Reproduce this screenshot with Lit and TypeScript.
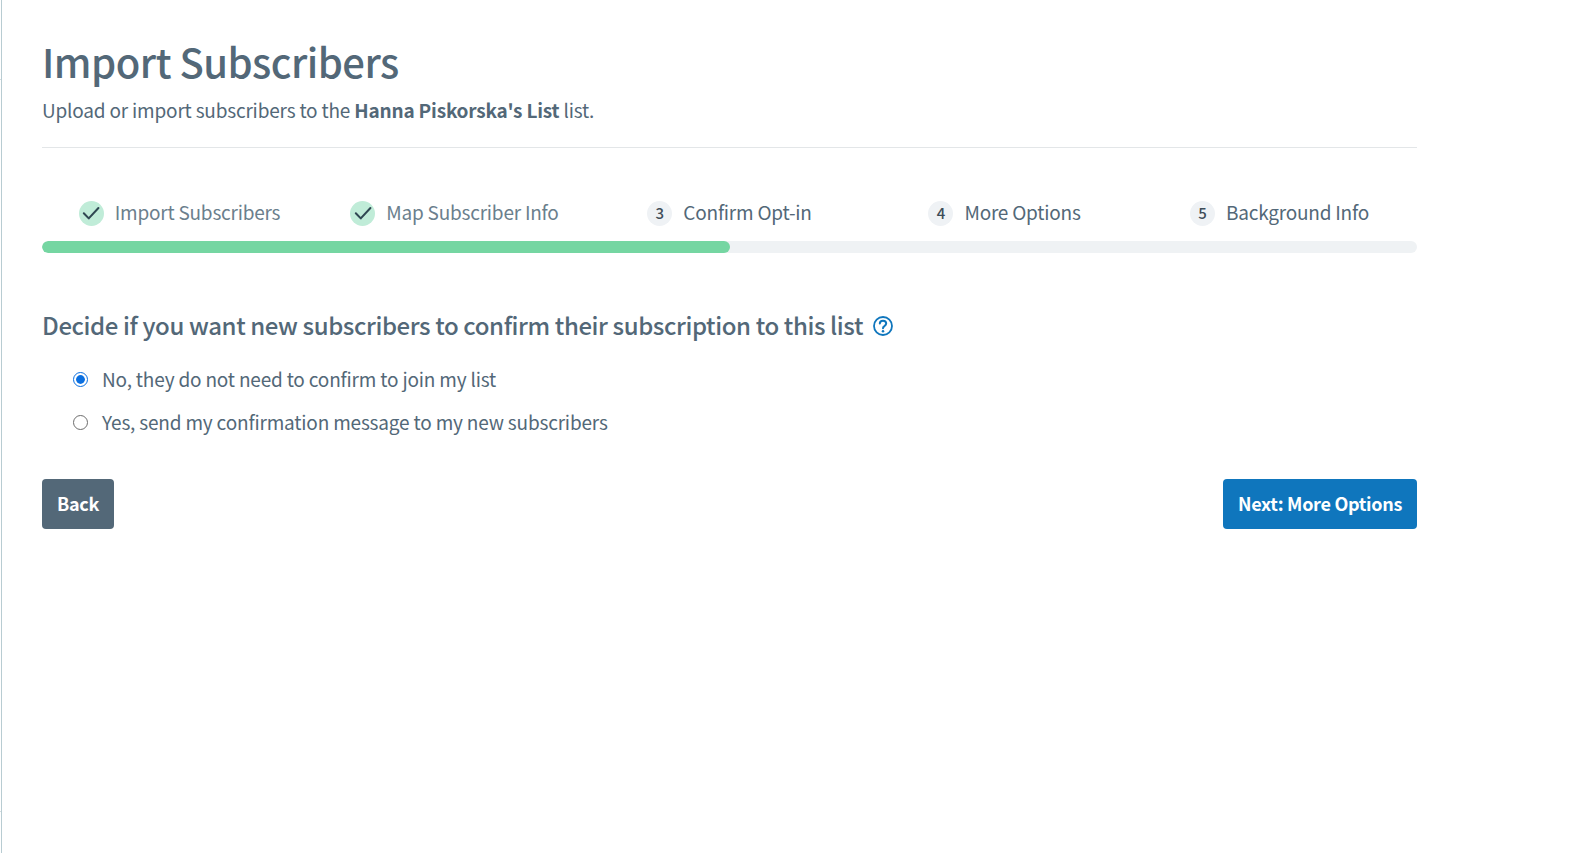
import { LitElement, html, css } from "lit";
import { customElement } from "lit/decorators.js";

const check = html`<svg width="18" height="18" viewBox="0 0 16 16" fill="none" stroke="#2f4752" stroke-width="1.8" stroke-linecap="round" stroke-linejoin="round"><path d="M1.6 8.2 6 12.8 14.6 3.6"/></svg>`;

const steps = [
  { n: 1, label: "Import Subscribers", done: true },
  { n: 2, label: "Map Subscriber Info", done: true },
  { n: 3, label: "Confirm Opt-in", done: false },
  { n: 4, label: "More Options", done: false },
  { n: 5, label: "Background Info", done: false },
];

@customElement("app-root")
export class AppRoot extends LitElement {
  static styles = css`
    :host {
      display: block;
      height: 853px;
      box-sizing: border-box;
      background: #fff;
      color: #536878;
      font-family: "Noto Sans CJK SC", "Source Sans Pro", "Noto Sans", sans-serif;
      position: relative;
    }
    .edge {
      position: absolute;
      left: 1px;
      top: 0;
      bottom: 0;
      width: 1px;
      background: #b8ccd2;
    }
    .tick {
      position: absolute;
      left: 0;
      width: 1px;
      height: 1px;
      background: #d4dde0;
    }
    .main {
      width: 1375px;
      margin-left: 42px;
      padding-top: 35px;
    }
    h1 {
      margin: 0;
      font-size: 40px;
      line-height: 52px;
      font-weight: 500;
      letter-spacing: -0.52px;
      color: #536878;
    }
    .sub {
      margin: 9px 0 0;
      font-size: 19px;
      line-height: 28px;
      font-weight: 400;
      letter-spacing: -0.19px;
    }
    .sub b { font-weight: 700; }
    hr {
      border: 0;
      height: 1px;
      background: #e3e6e8;
      margin: 23px 0 0;
    }
    .steps {
      display: grid;
      grid-template-columns: repeat(5, 1fr);
      margin-top: 50px;
    }
    .step {
      display: flex;
      align-items: center;
      justify-content: center;
      gap: 11px;
      height: 26px;
      font-size: 19px;
      letter-spacing: -0.22px;
      color: #536878;
    }
    .step.done { color: #6b7f8d; }
    .dot {
      width: 25px;
      height: 25px;
      box-sizing: border-box;
      padding-bottom: 2px;
      border-radius: 50%;
      background: #eff2f5;
      color: #3d4c58;
      display: flex;
      align-items: center;
      justify-content: center;
      font-size: 15px;
      font-weight: 500;
      letter-spacing: 0;
      margin-top: 4px;
    }
    .done .dot { background: #c0ecd8; padding-bottom: 0; }
    .bar {
      height: 12px;
      border-radius: 6px;
      background: #eff2f4;
      margin-top: 17px;
      overflow: hidden;
    }
    .fill {
      height: 100%;
      border-radius: 6px;
      background: #75d6a2;
    }
    h2 {
      margin: 56px 0 0;
      font-size: 24px;
      line-height: 32px;
      font-weight: 500;
      letter-spacing: -0.39px;
      display: flex;
      align-items: center;
      gap: 10px;
    }
    h2 svg { margin-top: 2px; }
    .opts {
      margin-top: 24px;
      padding-left: 31px;
      display: flex;
      flex-direction: column;
      gap: 15px;
    }
    label {
      display: flex;
      align-items: center;
      gap: 14px;
      font-size: 19px;
      line-height: 28px;
      letter-spacing: -0.18px;
    }
    .radio {
      width: 15px;
      height: 15px;
      box-sizing: border-box;
      border: 1.3px solid #6d6d6d;
      border-radius: 50%;
      background: #fff;
      flex: none;
    }
    .radio.on {
      border: 1.6px solid #0b6fe0;
      padding: 1.8px;
      background: #0b6fe0;
      background-clip: content-box;
    }
    .actions {
      display: flex;
      justify-content: space-between;
      margin-top: 43px;
    }
    button {
      height: 50px;
      border: 0;
      border-radius: 4px;
      padding: 0 15px 2px;
      color: #fff;
      font: 700 18px "Noto Sans CJK SC", "Noto Sans", sans-serif;
      letter-spacing: -0.3px;
    }
    .back { background: #536878; }
    .next { background: #0f76bd; }
  `;

  render() {
    return html`
      <div class="edge"></div>
      <div class="tick" style="top:79px"></div>
      <div class="tick" style="top:811px"></div>
      <div class="main">
        <h1>Import Subscribers</h1>
        <p class="sub">Upload or import subscribers to the <b>Hanna Piskorska's List</b> list.</p>
        <hr />
        <div class="steps">
          ${steps.map(
            (s) => html`<div class="step ${s.done ? "done" : ""}">
              <span class="dot">${s.done ? check : s.n}</span><span>${s.label}</span>
            </div>`
          )}
        </div>
        <div class="bar"><div class="fill" style="width:50%"></div></div>
        <h2>
          <span>Decide if you want new subscribers to confirm their subscription to this list</span>
          <svg width="20" height="20" viewBox="0 0 20 20" fill="none">
            <circle cx="10" cy="10" r="9" stroke="#0f76bd" stroke-width="1.8"/>
            <path d="M6.8 7.6C6.8 5.7 8.2 4.7 10 4.7s3.2 1.1 3.2 2.8c0 1.4-.9 2-1.8 2.6-.8.5-1.4 1-1.4 2.2" stroke="#0f76bd" stroke-width="2" stroke-linecap="round"/>
            <circle cx="10" cy="15.2" r="1.25" fill="#0f76bd"/>
          </svg>
        </h2>
        <div class="opts">
          <label><span class="radio on"></span><span>No, they do not need to confirm to join my list</span></label>
          <label><span class="radio"></span><span>Yes, send my confirmation message to my new subscribers</span></label>
        </div>
        <div class="actions">
          <button class="back">Back</button>
          <button class="next">Next: More Options</button>
        </div>
      </div>
    `;
  }
}
